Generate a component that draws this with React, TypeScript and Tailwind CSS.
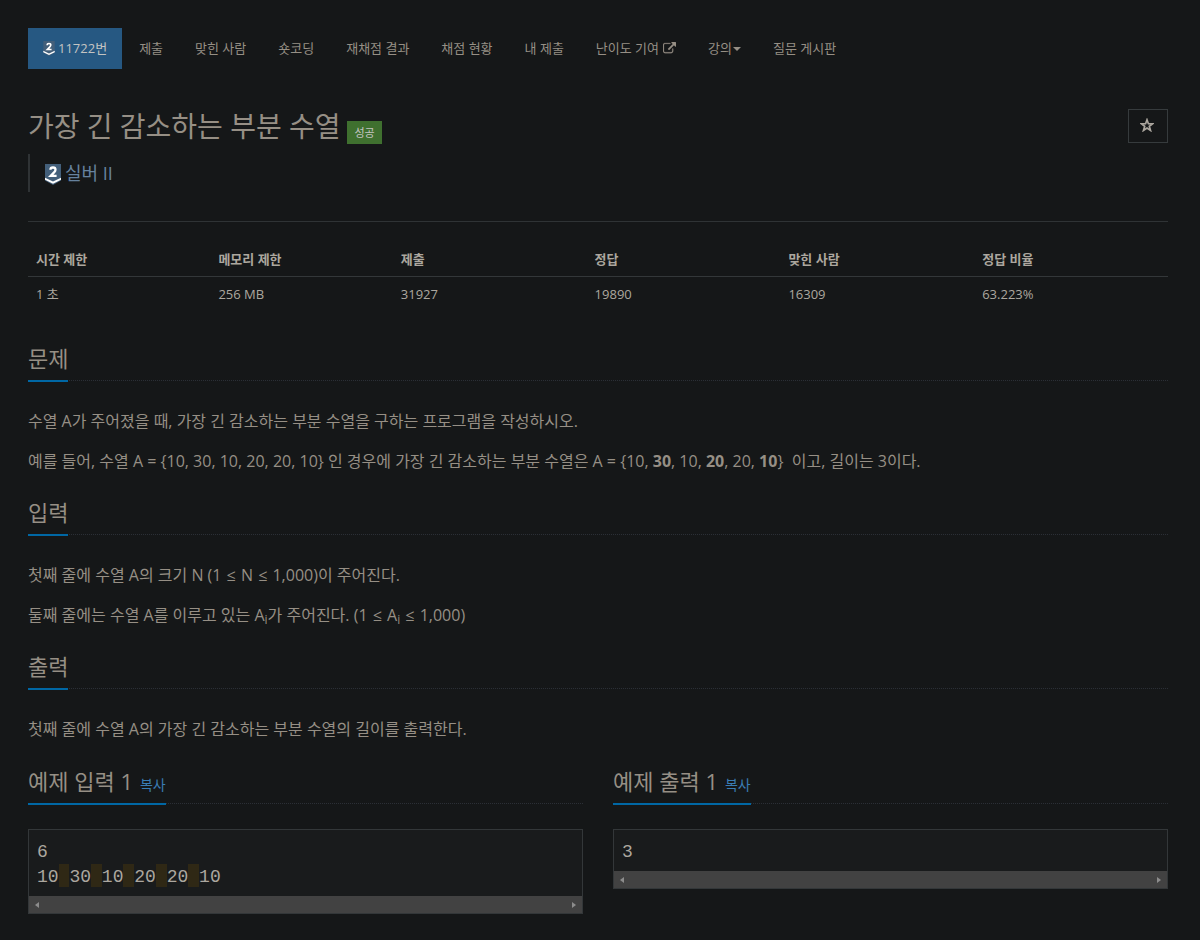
import type { ReactNode } from "react";

const NAV_ITEMS = ["제출", "맞힌 사람", "숏코딩", "재채점 결과", "채점 현황", "내 제출"];

const STATS = [
  { label: "시간 제한", value: "1 초", width: "w-[16%]" },
  { label: "메모리 제한", value: "256 MB", width: "w-[16%]" },
  { label: "제출", value: "31927", width: "w-[17%]" },
  { label: "정답", value: "19890", width: "w-[17%]" },
  { label: "맞힌 사람", value: "16309", width: "w-[17%]" },
  { label: "정답 비율", value: "63.223%", width: "w-[17%]" },
];

function TierBadge({ className }: { className: string }) {
  return (
    <svg viewBox="0 0 16 21" className={className} aria-hidden="true">
      <path d="M0 0h16v16.500l-8 4.500-8-4.500z" fill="#435f7a" />
      <path d="M0 13.800l8 3.800 8-3.800v2l-8 3.900-8-3.900z" fill="#fff" />
      <path
        d="M5.400 5.800C5.400 4.200 6.400 3.500 8 3.500s2.500.9 2.500 2.200c0 1.300-.8 2.100-1.900 3.200L5.700 11.900h5.900"
        fill="none"
        stroke="#fff"
        strokeWidth="2.300"
      />
    </svg>
  );
}

function ExternalIcon() {
  return (
    <svg
      viewBox="0 0 1792 1792"
      className="mb-px ml-1 inline-block h-[13px] w-[13px]"
      fill="currentColor"
      stroke="currentColor"
      strokeWidth="30"
      aria-hidden="true"
    >
      <path d="M1408 928v320q0 119-84.500 203.500T1120 1536H288q-119 0-203.500-84.500T0 1248V416q0-119 84.500-203.500T288 128h704q14 0 23 9t9 23v64q0 14-9 23t-23 9H288q-66 0-113 47t-47 113v832q0 66 47 113t113 47h832q66 0 113-47t47-113V928q0-14 9-23t23-9h64q14 0 23 9t9 23zm384-864v512q0 26-19 45t-45 19-45-19l-176-176-652 652q-10 10-23 10t-23-10L695 983q-10-10-10-23t10-23l652-652-176-176q-19-19-19-45t19-45 45-19h512q26 0 45 19t19 45z" />
    </svg>
  );
}

function NavLink({ children }: { children: ReactNode }) {
  return (
    <a href="#" className="flex items-center px-[15px] py-[10px] hover:bg-[#1f2223]">
      {children}
    </a>
  );
}

function Headline({ title, children }: { title: string; children?: ReactNode }) {
  return (
    <div className="mb-[25px] flex border-b border-dotted border-[#2b2f36]">
      <h2 className="-mb-[2px] border-b-2 border-[#0067a4] pb-[5px] text-[22px] leading-[33px] text-[#968f85]">
        {title}
        {children}
      </h2>
    </div>
  );
}

function Section({ title, children }: { title: string; children: ReactNode }) {
  return (
    <section className="mt-[10px] flow-root">
      <Headline title={title} />
      <div className="text-base leading-[30px] text-[#968f85] *:mb-[10px]">{children}</div>
    </section>
  );
}

function LessEq() {
  return <span className="px-px">≤</span>;
}

function Sample({ title, lines }: { title: string; lines: string[] }) {
  return (
    <section className="mt-[11px] min-w-0 flex-1">
      <Headline title={title}>
        <button type="button" className="ml-[7px] cursor-pointer text-[14px] leading-none text-[#3a7cb3]">
          복사
        </button>
      </Headline>
      <div className="border border-[#333739] bg-[#191b1c]">
        <pre className="px-2 pt-[10px] pb-[6px] font-['Liberation_Mono','Noto_Sans_CJK_KR',monospace] text-[18px] leading-[25px] text-[#aca79f]">
          {lines.map((line, i) => (
            <div key={i}>
              {line.split(" ").map((token, j) => (
                <span key={j}>
                  {j > 0 && <span className="bg-[#2f2815] pt-[3px]"> </span>}
                  {token}
                </span>
              ))}
            </div>
          ))}
        </pre>
        {/* horizontal scroll track */}
        <div className="flex h-[17px] items-center justify-between bg-[#424242] px-[6px]">
          <svg viewBox="0 0 4 6" className="h-[6px] w-[4px]" fill="#8c8c8c" aria-hidden="true">
            <path d="M4 0v6L0 3z" />
          </svg>
          <svg viewBox="0 0 4 6" className="h-[6px] w-[4px]" fill="#8c8c8c" aria-hidden="true">
            <path d="M0 0v6l4-3z" />
          </svg>
        </div>
      </div>
    </section>
  );
}

export default function App() {
  return (
    <div className="min-h-screen bg-[#151718] pt-7 pr-8 pb-[26px] pl-7 font-['Open_Sans','Noto_Sans_CJK_KR',sans-serif] text-[13px]">
      <nav className="flex flex-wrap gap-[2px] leading-[21px] text-[#968f85]">
        <a href="#" className="flex items-center bg-[#265882] px-[15px] py-[10px] text-[#c4c4c2]">
          <TierBadge className="mr-[3px] h-[15px] w-[12px]" />
          11722번
        </a>
        {NAV_ITEMS.map((item) => (
          <NavLink key={item}>{item}</NavLink>
        ))}
        <NavLink>
          난이도 기여
          <ExternalIcon />
        </NavLink>
        <NavLink>
          강의
          <span className="ml-px border-x-4 border-t-4 border-x-transparent border-t-current" />
        </NavLink>
        <NavLink>질문 게시판</NavLink>
      </nav>

      <header className="mt-10 flex items-start justify-between">
        <div>
          <h1 className="text-[28px] leading-[35px] text-[#968f85]">
            가장 긴 감소하는 부분 수열
            <span className="ml-[7px] inline-block bg-[#3f702f] px-[7px] text-[11px] leading-[23px] text-[#c4c4c2]">
              성공
            </span>
          </h1>
          <blockquote className="mt-[10px] flex h-[38px] items-center gap-1 border-l-2 border-[#2f3335] pl-[15px] text-[18px] text-[#66829e]">
            <TierBadge className="mt-[3px] h-[21px] w-4" />
            실버 II
          </blockquote>
        </div>
        <button
          type="button"
          aria-label="즐겨찾기"
          className="flex h-[34px] w-10 items-center justify-center border border-[#363b3d] pr-[2px] pb-[2px] text-[#aca79f]"
        >
          <svg
            viewBox="0 0 14 14"
            className="h-[14px] w-[14px]"
            fill="none"
            stroke="currentColor"
            strokeWidth="1.7"
            aria-hidden="true"
          >
            <path d="M7 1.800l1.400 3.900 4.200.1-3.300 2.500 1.200 4.100L7 10l-3.500 2.400 1.200-4.100-3.300-2.500 4.200-.1z" />
          </svg>
        </button>
      </header>

      <hr className="mt-[29px] mb-5 border-[#2f3335]" />

      <table className="mb-[31px] w-full table-fixed text-left leading-[18px] text-[#aca79f]">
        <thead>
          <tr className="border-b border-[#333739]">
            {STATS.map((s) => (
              <th key={s.label} className={`${s.width} p-2 font-bold`}>
                {s.label}
              </th>
            ))}
          </tr>
        </thead>
        <tbody>
          <tr>
            {STATS.map((s) => (
              <td key={s.label} className="p-2">
                {s.value}
              </td>
            ))}
          </tr>
        </tbody>
      </table>

      <main>
        <Section title="문제">
          <p>수열 A가 주어졌을 때, 가장 긴 감소하는 부분 수열을 구하는 프로그램을 작성하시오.</p>
          <p>
            예를 들어, 수열 A = {"{10, 30, 10, 20, 20, 10}"} 인 경우에 가장 긴 감소하는 부분 수열은 A = {"{10, "}
            <b>30</b>, 10, <b>20</b>, 20, <b>10</b>
            {"}"}&nbsp; 이고, 길이는 3이다.
          </p>
        </Section>

        <Section title="입력">
          <p>
            첫째 줄에 수열 A의 크기 N (1 <LessEq /> N <LessEq /> 1,000)이 주어진다.
          </p>
          <p>
            둘째 줄에는 수열 A를 이루고 있는 A<sub>i</sub>가 주어진다. (1 <LessEq /> A<sub>i</sub> <LessEq /> 1,000)
          </p>
        </Section>

        <Section title="출력">
          <p>첫째 줄에 수열 A의 가장 긴 감소하는 부분 수열의 길이를 출력한다.</p>
        </Section>

        <div className="flex gap-[30px]">
          <Sample title="예제 입력 1" lines={["6", "10 30 10 20 20 10"]} />
          <Sample title="예제 출력 1" lines={["3"]} />
        </div>
      </main>
    </div>
  );
}
